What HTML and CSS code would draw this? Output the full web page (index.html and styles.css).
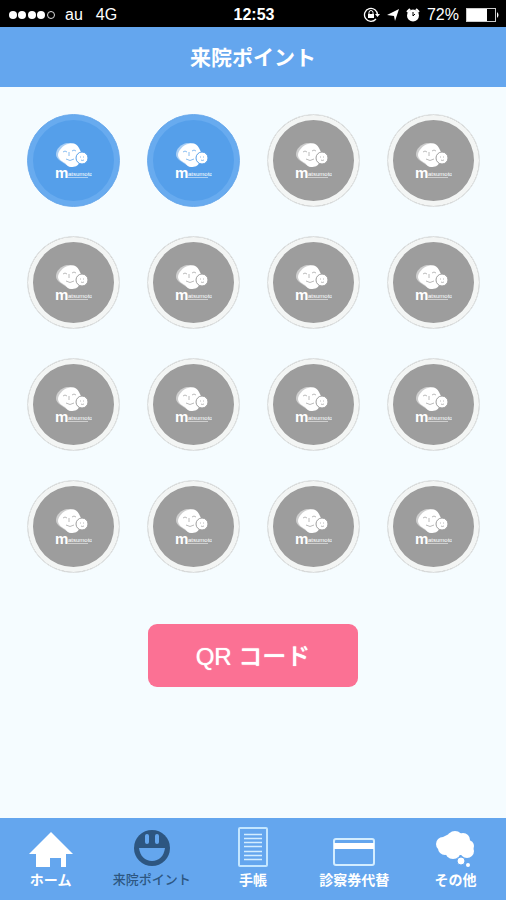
FILE: index.html
```html
<!DOCTYPE html>
<html lang="ja">
<head>
    <meta charset="UTF-8">
    <meta name="viewport" content="width=device-width, initial-scale=1.0">
    <title>来院ポイント</title>
    <link rel="stylesheet" href="styles.css">
</head>
<body>

<!-- スタンプのロゴ -->
<svg class="defs" aria-hidden="true">
    <symbol id="logo" viewBox="0 0 38 44">
        <path d="M13 4C7 5 2 10 2 15c0 4 3 6 6 8l6 4 8-1-5-22z" fill="#fff" stroke="none" opacity=".5"/>
        <path d="M14 5c5-2 9 0 11 4l3 6-3 9c-1 3-4 4-8 4-3 0-4-2-6-4-4-2-7-5-7-8 0-4 5-10 10-11z" fill="#fff" stroke="none"/>
        <circle cx="28" cy="19" r="6" fill="#fff" stroke-width="1"/>
        <path d="M9 13q2-2 4 0M18 12q2-2 4 0M15 13v4M12 20q4 3 8 0M26 18h1M29 18h1M27 21q1 1 3 0" fill="none" stroke-width="1" opacity=".7"/>
        <text x="1" y="39" class="logo-m">m</text>
        <text x="14" y="37" class="logo-text">atsumoto</text>
        <path d="M14 38.500h20" stroke="#fff" stroke-width="1" opacity=".5"/>
    </symbol>
</svg>

<div class="app">
    <div class="status">
        <div class="status-left">
            <svg width="47" height="12" viewBox="0 0 47 12" aria-hidden="true">
                <g fill="#fff"><circle cx="5" cy="6" r="4"/><circle cx="14" cy="6" r="4"/><circle cx="24" cy="6" r="4"/><circle cx="33" cy="6" r="4"/></g>
                <circle cx="43" cy="6" r="3.5" fill="none" stroke="#ddd"/>
            </svg>
            <span>au</span>
            <span>4G</span>
        </div>
        <div class="time">12:53</div>
        <div class="status-right">
            <svg width="17" height="16" viewBox="0 0 17 16" aria-hidden="true">
                <path d="M13 12a6.500 6.500 0 1 1 1.500-4" fill="none" stroke="#fff" stroke-width="1.300"/>
                <path d="M12 7h5l-2.500 3z" fill="#fff"/>
                <path d="M5 7h6v4H5z" fill="#fff"/>
                <path d="M6 7V5.500a2 2 0 0 1 4 0V7" fill="none" stroke="#fff"/>
            </svg>
            <svg width="12" height="12" viewBox="0 0 12 12" aria-hidden="true"><path d="M12 0L8 12 7 7 0 6z" fill="#fff"/></svg>
            <svg width="14" height="14" viewBox="0 0 14 14" aria-hidden="true">
                <circle cx="7" cy="7.500" r="6" fill="#fff"/>
                <path d="M1 4l3-3M13 4l-3-3" stroke="#fff" stroke-width="2"/>
                <path d="M7 4v4l2-2" fill="none" stroke="#000"/>
            </svg>
            <span>72%</span>
            <svg width="34" height="14" viewBox="0 0 34 14" aria-hidden="true">
                <rect x=".5" y=".5" width="29" height="13" fill="none" stroke="#ccc"/>
                <path d="M1 1h20v12H1z" fill="#fff"/>
                <path d="M31 4q3 3 0 6z" fill="#fff"/>
            </svg>
        </div>
    </div>

    <header class="header">
        <h1>来院ポイント</h1>
    </header>

    <main class="main">
        <ul class="stamps">
            <li class="stamp on"><svg><use href="#logo"/></svg></li>
            <li class="stamp on"><svg><use href="#logo"/></svg></li>
            <li class="stamp"><svg><use href="#logo"/></svg></li>
            <li class="stamp"><svg><use href="#logo"/></svg></li>
            <li class="stamp"><svg><use href="#logo"/></svg></li>
            <li class="stamp"><svg><use href="#logo"/></svg></li>
            <li class="stamp"><svg><use href="#logo"/></svg></li>
            <li class="stamp"><svg><use href="#logo"/></svg></li>
            <li class="stamp"><svg><use href="#logo"/></svg></li>
            <li class="stamp"><svg><use href="#logo"/></svg></li>
            <li class="stamp"><svg><use href="#logo"/></svg></li>
            <li class="stamp"><svg><use href="#logo"/></svg></li>
            <li class="stamp"><svg><use href="#logo"/></svg></li>
            <li class="stamp"><svg><use href="#logo"/></svg></li>
            <li class="stamp"><svg><use href="#logo"/></svg></li>
            <li class="stamp"><svg><use href="#logo"/></svg></li>
        </ul>
        <button type="button" class="qr-btn">QR コード</button>
    </main>

    <nav class="tabs">
        <a href="#home" class="tab">
            <svg width="44" height="42" viewBox="0 0 44 42" aria-hidden="true">
                <path d="M22 6L44 28h-7v13h-5v-9H21v9H7V28H0z" fill="#fff"/>
            </svg>
            ホーム
        </a>
        <a href="#point" class="tab current" aria-current="page">
            <svg width="36" height="42" viewBox="0 0 36 42" aria-hidden="true">
                <circle cx="18" cy="22" r="18" fill="#2d5681"/>
                <rect x="11" y="8" width="4" height="10" rx="2" fill="#64a6ee"/>
                <rect x="21" y="8" width="4" height="10" rx="2" fill="#64a6ee"/>
                <path d="M5 22h26c-1 8-6 13-13 13S6 30 5 22z" fill="#64a6ee"/>
            </svg>
            来院ポイント
        </a>
        <a href="#note" class="tab">
            <svg width="30" height="42" viewBox="0 0 30 42" aria-hidden="true">
                <rect x="1" y="2" width="28" height="38" rx="1" fill="none" stroke="#c3e6ff" stroke-width="2"/>
                <path d="M6 8.500h18M6 12.500h18M6 16.500h18M6 20.500h18M6 25.500h18M6 29.500h18M6 33.500h18" stroke="#d3edff" stroke-width="1.600"/>
            </svg>
            手帳
        </a>
        <a href="#card" class="tab">
            <svg width="42" height="42" viewBox="0 0 42 42" aria-hidden="true">
                <rect x="1" y="13" width="40" height="26" rx="2" fill="none" stroke="#d3edff" stroke-width="2"/>
                <path d="M1 17h40v6H1z" fill="#fff"/>
            </svg>
            診察券代替
        </a>
        <a href="#other" class="tab">
            <svg width="40" height="42" viewBox="0 0 40 42" aria-hidden="true">
                <g fill="#fff">
                    <circle cx="8" cy="18" r="7"/>
                    <circle cx="20" cy="13" r="8"/>
                    <circle cx="28" cy="14" r="7"/>
                    <circle cx="33" cy="20" r="6"/>
                    <circle cx="10" cy="22" r="7"/>
                    <circle cx="18" cy="25" r="8"/>
                    <circle cx="32" cy="25" r="7"/>
                    <path d="M8 11l8-4 17 7v15H15z"/>
                    <circle cx="26" cy="35" r="4" stroke="#64a6ee"/>
                    <circle cx="33" cy="39" r="2"/>
                </g>
            </svg>
            その他
        </a>
    </nav>
</div>

</body>
</html>
```

FILE: styles.css
```css
* {
    box-sizing: border-box;
}
body {
    margin: 0;
    background-color: #f5fcff;
    font-family: "Liberation Sans", "Noto Sans CJK JP", sans-serif;
}
.defs {
    display: none;
}
.app {
    display: flex;
    flex-direction: column;
    min-height: 100vh;
}

/* ステータスバー */
.status {
    display: grid;
    grid-template-columns: 1fr auto 1fr;
    align-items: center;
    height: 27px;
    padding: 2px 6px 0 8px;
    background-color: #000;
    color: #fff;
    font-size: 16px;
}
.status-left {
    display: flex;
    align-items: center;
    gap: 13px;
}
.status-left svg {
    margin-right: -3px;
}
.time {
    font-weight: bold;
}
.status-right {
    display: flex;
    align-items: center;
    justify-content: flex-end;
    gap: 7px;
}
.status-right svg {
    flex: none;
}

.header {
    display: flex;
    align-items: center;
    justify-content: center;
    height: 60px;
    padding-bottom: 2px;
    background-color: #64a6ee;
    color: #fff;
}
.header h1 {
    margin: 0;
    font-size: 21px;
    font-weight: bold;
    font-family: "Noto Sans CJK JP", sans-serif;
}

/* スタンプ */
.main {
    flex: 1;
    display: flex;
    flex-direction: column;
    align-items: center;
    padding: 27px 13px;
}
.stamps {
    display: grid;
    grid-template-columns: repeat(4, 1fr);
    justify-items: center;
    row-gap: 29px;
    width: 100%;
    margin: 0;
    padding: 0;
    list-style: none;
}
.stamp {
    display: flex;
    align-items: center;
    justify-content: center;
    width: 93px;
    height: 93px;
    border: 1px solid #e4e7e7;
    border-radius: 50%;
    background-color: #9d9d9d;
    box-shadow: inset 0 0 0 5px #f3f5f4;
    stroke: #9d9d9d;
}
.stamp.on {
    border-color: #70aded;
    background-color: #559fea;
    box-shadow: inset 0 0 0 5px #68abef;
    stroke: #559fea;
}
.stamp svg {
    width: 38px;
    height: 44px;
}
.logo-m,
.logo-text {
    fill: #fff;
    stroke: none;
    font-family: "Liberation Sans", sans-serif;
}
.logo-m {
    font-size: 15px;
    font-weight: bold;
}
.logo-text {
    font-size: 6px;
}
.qr-btn {
    width: 210px;
    height: 63px;
    margin-top: 51px;
    padding: 0 0 3px;
    border: none;
    border-radius: 9px;
    background-color: #fb7194;
    color: #fff;
    font-family: "Liberation Sans", "Noto Sans CJK JP", sans-serif;
    font-size: 24px;
    font-weight: 500;
    text-shadow: 0 0 1px #fff;
    cursor: pointer;
}

/* 下部メニュー */
.tabs {
    display: grid;
    grid-template-columns: repeat(5, 1fr);
    height: 82px;
    padding-top: 8px;
    background-color: #64a6ee;
}
.tab {
    display: flex;
    flex-direction: column;
    align-items: center;
    gap: 1px;
    color: #fff;
    font-family: "Noto Sans CJK JP", sans-serif;
    font-size: 14px;
    font-weight: bold;
    line-height: 20px;
    text-decoration: none;
    white-space: nowrap;
}
.tab.current {
    color: #2d5681;
    font-size: 13px;
    font-weight: 500;
}
```
